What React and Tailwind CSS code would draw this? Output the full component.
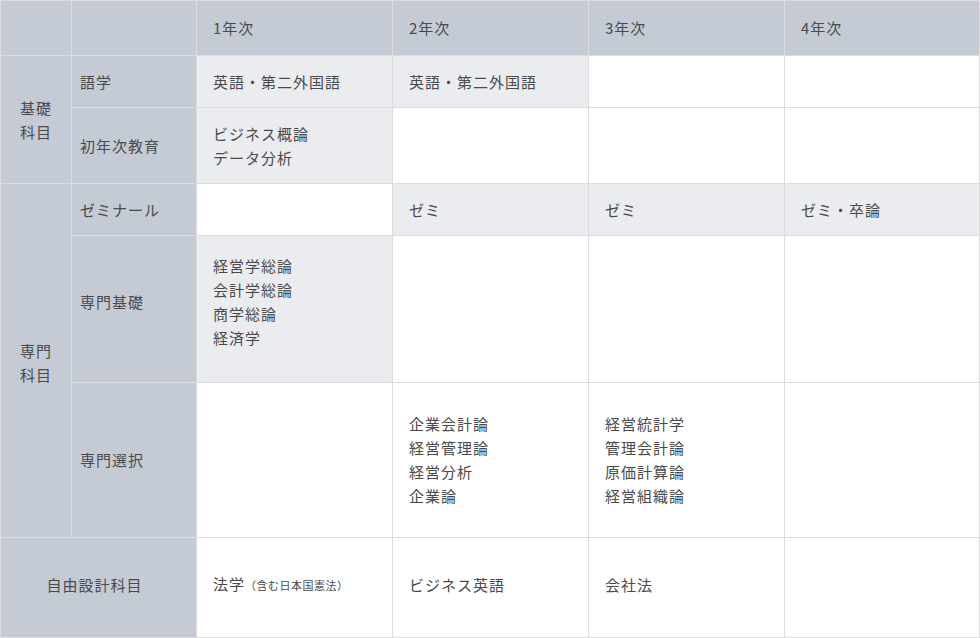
import React from "react";

const H = "bg-[#c5cbd4]";
const L = "bg-[#ebecef]";
const W = "bg-white";

function Cell({ bg, className = "", children }) {
  return (
    <div className={`${bg} flex flex-col justify-center ${className}`}>
      {children}
    </div>
  );
}

function Lines({ items }) {
  return (
    <div className="flex flex-col">
      {items.map((t) => (
        <span key={t}>{t}</span>
      ))}
    </div>
  );
}

export default function App() {
  return (
    <div
      className="w-[980px] h-[638px] bg-white text-[15px] leading-[24px] tracking-[1px] text-[#4a4a4a]"
      style={{ fontFamily: '"Noto Sans CJK JP", "Noto Sans", sans-serif' }}
    >
      <div className="grid grid-cols-[70px_124px_195px_195px_195px_194px] grid-rows-[54px_51px_75px_51px_146px_154px_99px] gap-px p-px bg-[#dddddd] w-[980px] h-[638px]">
        {/* header */}
        <Cell bg={H} />
        <Cell bg={H} />
        <Cell bg={H} className="pl-4">1年次</Cell>
        <Cell bg={H} className="pl-4">2年次</Cell>
        <Cell bg={H} className="pl-4">3年次</Cell>
        <Cell bg={H} className="pl-4">4年次</Cell>

        {/* 基礎科目 */}
        <Cell bg={H} className="row-span-2 items-center text-center">
          <span>基礎</span>
          <span>科目</span>
        </Cell>
        <Cell bg={H} className="pl-2">語学</Cell>
        <Cell bg={L} className="pl-4">英語・第二外国語</Cell>
        <Cell bg={L} className="pl-4">英語・第二外国語</Cell>
        <Cell bg={W} />
        <Cell bg={W} />

        <Cell bg={H} className="pl-2">初年次教育</Cell>
        <Cell bg={L} className="pl-4">
          <Lines items={["ビジネス概論", "データ分析"]} />
        </Cell>
        <Cell bg={W} />
        <Cell bg={W} />
        <Cell bg={W} />

        {/* 専門科目 */}
        <Cell bg={H} className="row-span-3 items-center text-center pt-1">
          <span>専門</span>
          <span>科目</span>
        </Cell>
        <Cell bg={H} className="pl-2">ゼミナール</Cell>
        <Cell bg={W} />
        <Cell bg={L} className="pl-4">ゼミ</Cell>
        <Cell bg={L} className="pl-4">ゼミ</Cell>
        <Cell bg={L} className="pl-4">ゼミ・卒論</Cell>

        <Cell bg={H} className="pl-2 pb-[14px]">専門基礎</Cell>
        <Cell bg={L} className="pl-4 pb-[14px]">
          <Lines items={["経営学総論", "会計学総論", "商学総論", "経済学"]} />
        </Cell>
        <Cell bg={W} />
        <Cell bg={W} />
        <Cell bg={W} />

        <Cell bg={H} className="pl-2">専門選択</Cell>
        <Cell bg={W} />
        <Cell bg={W} className="pl-4">
          <Lines items={["企業会計論", "経営管理論", "経営分析", "企業論"]} />
        </Cell>
        <Cell bg={W} className="pl-4">
          <Lines items={["経営統計学", "管理会計論", "原価計算論", "経営組織論"]} />
        </Cell>
        <Cell bg={W} />

        {/* 自由設計科目 */}
        <Cell bg={H} className="col-span-2 items-center text-center pr-[8px] pb-[6px]">
          自由設計科目
        </Cell>
        <Cell bg={W} className="pl-4 pb-[6px]">
          <span>
            法学<span className="text-[11px] tracking-[0.5px]">（含む日本国憲法）</span>
          </span>
        </Cell>
        <Cell bg={W} className="pl-4 pb-[6px]">ビジネス英語</Cell>
        <Cell bg={W} className="pl-4 pb-[6px]">会社法</Cell>
        <Cell bg={W} />
      </div>
    </div>
  );
}
